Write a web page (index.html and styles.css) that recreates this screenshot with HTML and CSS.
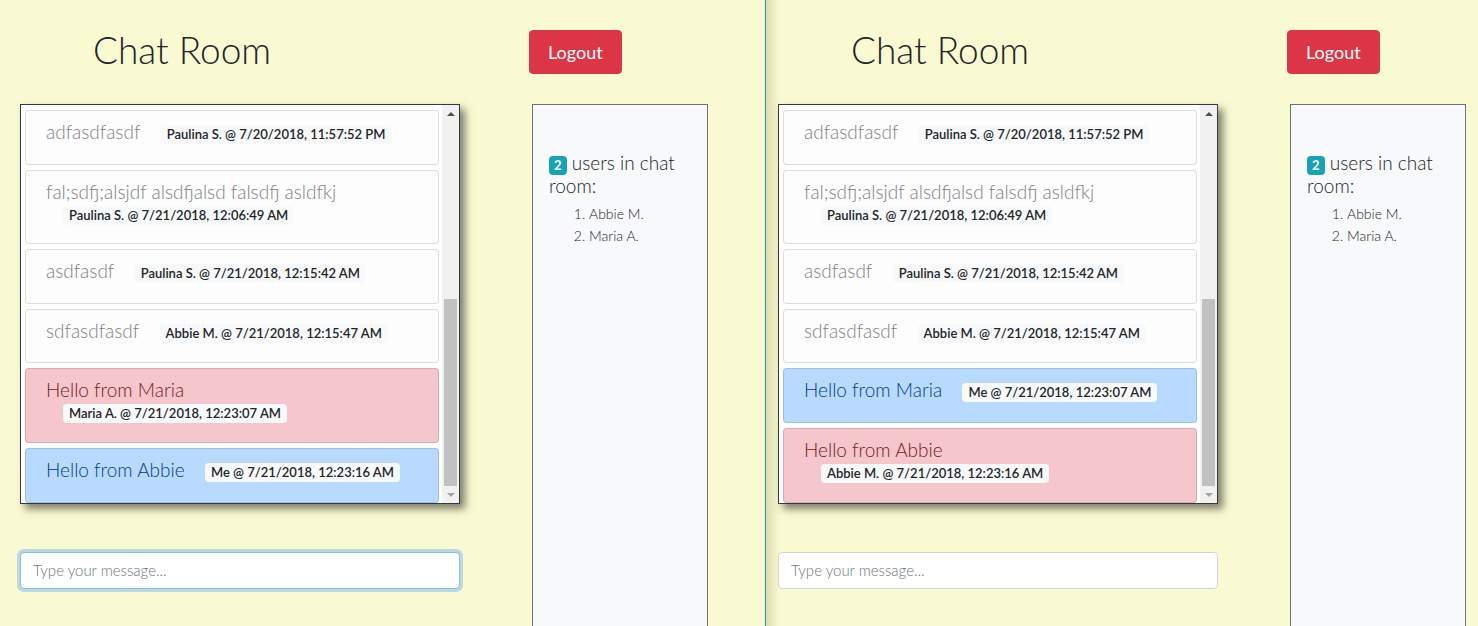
FILE: index.html
```html
<!DOCTYPE html>
<html lang="en">
<head>
<meta charset="utf-8">
<title>Chat Room</title>
<link rel="stylesheet" href="styles.css">
</head>
<body>
<div class="screen">
  <section class="pane pane-left">
    <div class="layout">
      <div class="head-title"><h1 class="title">Chat Room</h1></div>
      <div class="head-action"><button class="logout" type="button">Logout</button></div>
      <div class="chat-col">
        <div class="chat-box">
          <ul class="messages">
            <li class="msg msg-light"><span class="msg-text">adfasdfasdf</span> <span class="stamp">Paulina S. @ 7/20/2018, 11:57:52 PM</span></li>
            <li class="msg msg-light"><span class="msg-text">fal;sdfj;alsjdf alsdfjalsd falsdfj asldfkj</span> <span class="stamp">Paulina S. @ 7/21/2018, 12:06:49 AM</span></li>
            <li class="msg msg-light"><span class="msg-text">asdfasdf</span> <span class="stamp">Paulina S. @ 7/21/2018, 12:15:42 AM</span></li>
            <li class="msg msg-light"><span class="msg-text">sdfasdfasdf</span> <span class="stamp">Abbie M. @ 7/21/2018, 12:15:47 AM</span></li>
            <li class="msg msg-danger"><span class="msg-text">Hello from Maria</span> <span class="stamp">Maria A. @ 7/21/2018, 12:23:07 AM</span></li>
            <li class="msg msg-primary"><span class="msg-text">Hello from Abbie</span> <span class="stamp">Me @ 7/21/2018, 12:23:16 AM</span></li>
          </ul>
          <div class="scrollbar">
            <div class="sb-btn sb-up"></div>
            <div class="sb-track"><div class="sb-thumb"></div></div>
            <div class="sb-btn sb-down"></div>
          </div>
        </div>
        <input class="msg-input is-focused" type="text" placeholder="Type your message...">
      </div>
      <aside class="users">
        <h5 class="users-head"><span class="count">2</span> <span class="users-label">users in chat</span> <span class="users-label">room:</span></h5>
        <ol class="user-list">
          <li>Abbie M.</li>
          <li>Maria A.</li>
        </ol>
      </aside>
    </div>
  </section>
  <section class="pane pane-right">
    <div class="layout">
      <div class="head-title"><h1 class="title">Chat Room</h1></div>
      <div class="head-action"><button class="logout" type="button">Logout</button></div>
      <div class="chat-col">
        <div class="chat-box">
          <ul class="messages">
            <li class="msg msg-light"><span class="msg-text">adfasdfasdf</span> <span class="stamp">Paulina S. @ 7/20/2018, 11:57:52 PM</span></li>
            <li class="msg msg-light"><span class="msg-text">fal;sdfj;alsjdf alsdfjalsd falsdfj asldfkj</span> <span class="stamp">Paulina S. @ 7/21/2018, 12:06:49 AM</span></li>
            <li class="msg msg-light"><span class="msg-text">asdfasdf</span> <span class="stamp">Paulina S. @ 7/21/2018, 12:15:42 AM</span></li>
            <li class="msg msg-light"><span class="msg-text">sdfasdfasdf</span> <span class="stamp">Abbie M. @ 7/21/2018, 12:15:47 AM</span></li>
            <li class="msg msg-primary"><span class="msg-text">Hello from Maria</span> <span class="stamp">Me @ 7/21/2018, 12:23:07 AM</span></li>
            <li class="msg msg-danger"><span class="msg-text">Hello from Abbie</span> <span class="stamp">Abbie M. @ 7/21/2018, 12:23:16 AM</span></li>
          </ul>
          <div class="scrollbar">
            <div class="sb-btn sb-up"></div>
            <div class="sb-track"><div class="sb-thumb"></div></div>
            <div class="sb-btn sb-down"></div>
          </div>
        </div>
        <input class="msg-input" type="text" placeholder="Type your message...">
      </div>
      <aside class="users">
        <h5 class="users-head"><span class="count">2</span> <span class="users-label">users in chat</span> <span class="users-label">room:</span></h5>
        <ol class="user-list">
          <li>Abbie M.</li>
          <li>Maria A.</li>
        </ol>
      </aside>
    </div>
  </section>
</div>
</body>
</html>
```

FILE: styles.css
```css
html, body {
  margin: 0;
  padding: 0;
}

body {
  font-family: Lato, "Open Sans", "Liberation Sans", sans-serif;
  color: #212529;
  background: #fafad2;
  overflow: hidden;
}

.screen {
  display: flex;
  height: 626px;
  overflow: hidden;
}

.pane {
  box-sizing: border-box;
  height: 626px;
  overflow: hidden;
}

.pane-left {
  width: 765px;
  flex: none;
  padding-left: 20px;
}

.pane-right {
  flex: 1;
  padding-left: 12px;
  border-left: 1px solid #1e9fa3;
  background: linear-gradient(90deg, rgba(110, 100, 30, 0.2), rgba(110, 100, 30, 0) 14px), #fafad2;
}

.layout {
  display: grid;
  grid-template-columns: 440px 176px;
  grid-template-rows: 104px auto;
  column-gap: 69px;
}

.head-title {
  padding-left: 73px;
  padding-top: 28px;
}

.title {
  margin: 0;
  font-size: 37px;
  line-height: 44px;
  font-weight: 300;
  color: #212529;
}

.head-action {
  padding-top: 30px;
}

.logout {
  height: 44px;
  padding: 0 18px 1px;
  font-family: Lato, "Open Sans", sans-serif;
  font-size: 18px;
  color: #fff;
  background: #dc3545;
  border: 1px solid #dc3545;
  border-radius: 4px;
}

.chat-box {
  box-sizing: border-box;
  width: 440px;
  height: 400px;
  border: 1px solid #343a40;
  background: #fff;
  display: flex;
  box-shadow: 5px 5px 8px rgba(0, 0, 0, 0.5);
  overflow: hidden;
}

.messages {
  flex: 1;
  margin: 0;
  padding: 5px 3px 0 4px;
  list-style: none;
  overflow: hidden;
}

.msg {
  border: 1px solid rgba(0, 0, 0, 0.125);
  border-radius: 4px;
  padding: 7px 20px 18.6px;
  margin-bottom: 5px;
  font-size: 13px;
  line-height: 20px;
}

.msg-text {
  font-size: 19px;
  line-height: 27px;
  font-weight: 300;
}

.msg-light {
  background: #fdfdfe;
  color: #818182;
}

.msg-danger {
  background: #f5c6cb;
  color: #721c24;
}

.msg-primary {
  background: #b8daff;
  color: #004085;
}

.stamp {
  display: inline-block;
  margin-left: 17px;
  padding: 3px 6px;
  font-size: 13px;
  line-height: 1;
  font-weight: 600;
  color: #212529;
  background: #f8f9fa;
  border-radius: 4px;
}

.scrollbar {
  width: 17px;
  flex: none;
  background: #f1f1f1;
  display: flex;
  flex-direction: column;
}

.sb-btn {
  height: 17px;
  flex: none;
  display: flex;
  align-items: center;
  justify-content: center;
}

.sb-up::before {
  content: "";
  border-left: 4px solid transparent;
  border-right: 4px solid transparent;
  border-bottom: 4px solid #505050;
}

.sb-down::before {
  content: "";
  border-left: 4px solid transparent;
  border-right: 4px solid transparent;
  border-top: 4px solid #a3a3a3;
}

.sb-track {
  flex: 1;
  display: flex;
  flex-direction: column;
  justify-content: flex-end;
  padding: 0 2px;
}

.sb-thumb {
  height: 187px;
  background: #c1c1c1;
}

.msg-input {
  display: block;
  box-sizing: border-box;
  width: 440px;
  height: 37px;
  margin-top: 48px;
  padding: 0 12px 2px;
  font-family: Lato, "Open Sans", sans-serif;
  font-size: 15px;
  font-weight: 300;
  color: #495057;
  background: #fff;
  border: 1px solid #ced4da;
  border-radius: 4px;
  outline: none;
}

.msg-input::placeholder {
  color: #6c757d;
  opacity: 1;
}

.msg-input.is-focused {
  border-color: #80bdff;
  box-shadow: 0 0 0 3px rgba(0, 123, 255, 0.25);
}

.users {
  box-sizing: border-box;
  width: 176px;
  height: 560px;
  margin-left: 3px;
  padding: 47px 15px 0 16px;
  background: #f8f9fa;
  border: 1px solid #6c757d;
}

.users-head {
  margin: 0;
  font-size: 19px;
  line-height: 21px;
  font-weight: 300;
}

.count {
  display: inline-block;
  padding: 3px 5px;
  font-size: 13px;
  line-height: 1;
  font-weight: 700;
  color: #fff;
  background: #17a2b8;
  border-radius: 4px;
}

.user-list {
  margin: 7px 0 0;
  padding-left: 40px;
  font-size: 14px;
  line-height: 22px;
  font-weight: 300;
}
```
